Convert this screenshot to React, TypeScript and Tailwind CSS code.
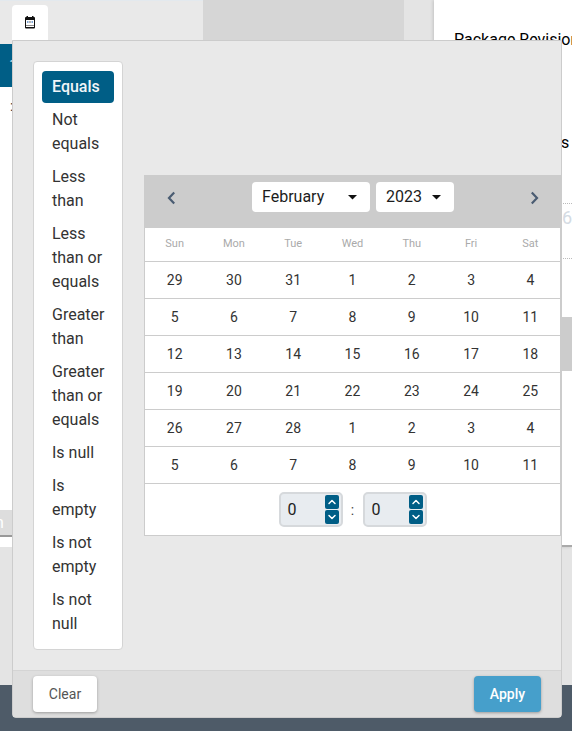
import { ChevronUp, ChevronDown } from "lucide-react";

const operators = [
  { label: "Equals", active: true },
  { label: "Not equals" },
  { label: "Less than" },
  { label: "Less than or equals" },
  { label: "Greater than" },
  { label: "Greater than or equals" },
  { label: "Is null" },
  { label: "Is empty" },
  { label: "Is not empty" },
  { label: "Is not null" },
];

const weekdays = ["Sun", "Mon", "Tue", "Wed", "Thu", "Fri", "Sat"];

const weeks = [
  [29, 30, 31, 1, 2, 3, 4],
  [5, 6, 7, 8, 9, 10, 11],
  [12, 13, 14, 15, 16, 17, 18],
  [19, 20, 21, 22, 23, 24, 25],
  [26, 27, 28, 1, 2, 3, 4],
  [5, 6, 7, 8, 9, 10, 11],
];

const Caret = () => (
  <svg width="9" height="5" viewBox="0 0 9 5" className="block">
    <path d="M0 0h9L4.5 4.5z" fill="#111" />
  </svg>
);

const NavArrow = ({ left }: { left?: boolean }) => (
  <svg width="9" height="14" viewBox="0 0 9 14" className="block">
    <path
      d={left ? "M7.2 1.6 2 7l5.2 5.4" : "M1.8 1.6 7 7l-5.2 5.4"}
      fill="none"
      stroke="#4a5c72"
      strokeWidth="2.2"
    />
  </svg>
);

// small calendar in the tab above the popover
const CalendarGlyph = () => (
  <svg width="12" height="13" viewBox="0 0 12 13" className="block">
    <rect x="1" y="1" width="10" height="11.5" rx="1" fill="#111" />
    <rect x="2.5" y="0" width="1.5" height="2" fill="#111" />
    <rect x="8" y="0" width="1.5" height="2" fill="#111" />
    <rect x="2" y="4" width="8" height="5" fill="#fff" />
    <rect x="2" y="9.5" width="8" height="1.5" fill="#fff" />
    <rect x="3" y="5" width="1.5" height="2" fill="#7fa6d6" />
    <rect x="5.25" y="5" width="1.5" height="2" fill="#9a9a9a" />
    <rect x="7.5" y="5" width="1.5" height="2" fill="#7fa6d6" />
  </svg>
);

const TimeInput = () => (
  <div className="flex h-[35px] w-[64px] items-center justify-between rounded-[5px] border-2 border-[#d6d9dc] bg-[#e8ecf0] pl-[7px] pr-[2px] text-base text-[#222]">
    <span>0</span>
    <div className="flex flex-col gap-px">
      <div className="flex h-[14px] w-[14px] items-center justify-center rounded-[2px] bg-[#005e86]">
        <ChevronUp size={12} strokeWidth={3} color="#fff" />
      </div>
      <div className="flex h-[14px] w-[14px] items-center justify-center rounded-[2px] bg-[#005e86]">
        <ChevronDown size={12} strokeWidth={3} color="#fff" />
      </div>
    </div>
  </div>
);

const FilterPopover = () => (
  <div className="absolute left-[12px] top-[40px] flex h-[678px] w-[550px] flex-col rounded-b-[4px] border border-[#cccccc] bg-[#e9e9e9]">
    <div className="flex h-[629px] items-center pl-[20px]">
      <ul className="w-[90px] self-start mt-[20px] rounded-[4px] border border-[#d4d4d4] bg-white px-[8px] py-[9px] text-base leading-6 text-[#333]">
        {operators.map((op) => (
          <li
            key={op.label}
            className={
              op.active
                ? "mb-px rounded-[4px] bg-[#005e86] px-[10px] py-[4px] font-medium text-[#f0f5f8]"
                : "mb-px px-[10px] py-[4px] last:mb-0"
            }
          >
            {op.label}
          </li>
        ))}
      </ul>

      <div className="ml-[21px] w-[417px] border border-[#cccccc] bg-white">
        <div className="flex h-[52px] items-start justify-between bg-[#cccccc] pl-[22px] pr-[21px] pt-[6px]">
          <div className="flex h-[32px] items-center">
            <NavArrow left />
          </div>
          <div className="flex gap-[6px] text-base text-[#1c1c1c]">
            <div className="flex h-[30px] w-[118px] items-center justify-between rounded-[4px] bg-white pl-[10px] pr-[13px]">
              <span>February</span>
              <Caret />
            </div>
            <div className="flex h-[30px] w-[78px] items-center justify-between rounded-[4px] bg-white pl-[10px] pr-[13px]">
              <span>2023</span>
              <Caret />
            </div>
          </div>
          <div className="flex h-[32px] items-center">
            <NavArrow />
          </div>
        </div>

        <div className="grid h-[34px] grid-cols-7 items-center border-b border-[#cccccc] pb-px text-center text-[11px] text-[#aaaaaa]">
          {weekdays.map((day) => (
            <div key={day}>{day}</div>
          ))}
        </div>

        {weeks.map((week, i) => (
          <div key={i} className="grid h-[37px] grid-cols-7 items-center border-b border-[#cccccc] text-center text-sm text-[#333]">
            {week.map((d, j) => (
              <div key={j}>{d}</div>
            ))}
          </div>
        ))}

        <div className="flex h-[51px] items-center justify-center">
          <TimeInput />
          <span className="w-[20px] text-center text-sm text-[#444]">:</span>
          <TimeInput />
        </div>
      </div>
    </div>

    <div className="flex h-[47px] items-start justify-between border-t border-[#d4d4d4] bg-[#dedede] px-[20px] pt-[5px]">
      <button className="h-[36px] w-[64px] rounded-[4px] bg-white text-sm text-[#555] shadow-[0_1px_3px_rgba(0,0,0,0.3)]">
        Clear
      </button>
      <button className="h-[36px] w-[67px] rounded-[4px] bg-[#469fcb] text-sm font-medium text-white shadow-[0_1px_3px_rgba(0,0,0,0.3)]">
        Apply
      </button>
    </div>
  </div>
);

export default function App() {
  return (
    <div className="relative h-[731px] w-[572px] overflow-hidden bg-[#e4e4e4] font-['Roboto',sans-serif]">
      <div className="flex h-[685px] flex-col">
        <div className="flex h-[547px]">
          <div className="flex w-[434px] flex-col">
            <div className="flex h-[44px]">
              <div className="w-[203px] border-t border-[#e3e9ee] bg-[#e9e9e9]" />
              <div className="w-[201px] bg-[#d6d6d6]" />
              <div className="w-[30px] bg-[#e4e4e4]" />
            </div>
            <div className="h-[43px] bg-[#005e86] pl-[9px] pt-[10px] text-base text-[#cfe6f2]">1</div>
            <div className="h-[423px] bg-white pl-[10px] pt-[9px] text-sm text-[#333]">:</div>
            <div className="h-[27px] overflow-hidden border-b-2 border-[#999] bg-[#dddddd] pt-[1px] text-base text-white">
              <span className="-ml-[5px]">n</span>
            </div>
            <div className="h-[10px] bg-white" />
          </div>
          <div className="w-[138px] border-b-2 border-[#aaa] bg-white text-black shadow-[-1px_0_3px_rgba(0,0,0,0.15)]">
            <div className="h-[31px]" />
            <div className="pl-[20px] text-base leading-[18px] whitespace-nowrap">Package Revision</div>
            <div className="h-[85px]" />
            <div className="pl-[127px] text-base leading-[18px] whitespace-nowrap">s s</div>
            <div className="h-[52px] border-b border-dotted border-[#bbb]" />
            <div className="h-[55px] border-b border-dotted border-[#bbb] pl-[128px] text-lg leading-[28px] text-[#d4dbe3]">6</div>
            <div className="h-[58px]" />
            <div className="h-[54px] bg-[#cccccc]" />
          </div>
        </div>
      </div>
      <div className="h-[46px] bg-[#4e5b68]" />

      <div className="absolute left-[12px] top-[5px] flex h-[35px] w-[36px] items-center justify-center rounded-t-[4px] bg-white">
        <CalendarGlyph />
      </div>
      <FilterPopover />
    </div>
  );
}
